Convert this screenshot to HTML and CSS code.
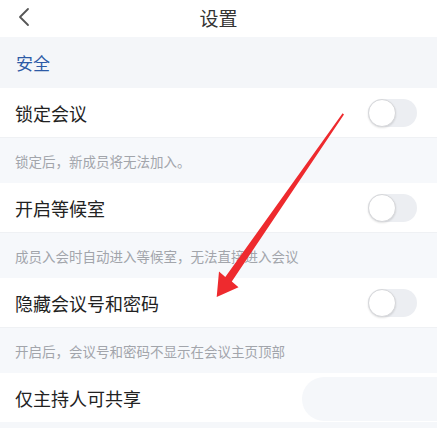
FILE: index.html
```html
<!DOCTYPE html>
<html lang="zh">
<head>
<meta charset="utf-8">
<link rel="stylesheet" href="styles.css">
</head>
<body>
<div class="page">
  <header class="topbar">
    <svg class="back" width="14" height="20" viewBox="0 0 14 20"><path d="M11 2 L3 10 L11 18" fill="none" stroke="#555" stroke-width="1.8" stroke-linecap="round" stroke-linejoin="round"/></svg>
    <div class="title">设置</div>
  </header>
  <div class="section">安全</div>
  <div class="row"><span class="label">锁定会议</span><span class="toggle"><span class="knob"></span></span></div>
  <div class="sub">锁定后，新成员将无法加入。</div>
  <div class="row"><span class="label">开启等候室</span><span class="toggle"><span class="knob"></span></span></div>
  <div class="sub">成员入会时自动进入等候室，无法直接进入会议</div>
  <div class="row"><span class="label">隐藏会议号和密码</span><span class="toggle"><span class="knob"></span></span></div>
  <div class="sub">开启后，会议号和密码不显示在会议主页顶部</div>
  <div class="row last"><span class="label">仅主持人可共享</span><span class="ghost"></span></div>
  <svg class="arrow" width="437" height="428" viewBox="0 0 437 428">
    <polygon points="216.7,297 219,271.5 225.3,277 342.6,113.2 344,114.4 231.8,281.6 238.5,287.2" fill="#ee2a2e"/>
  </svg>
</div>
</body>
</html>
```
FILE: styles.css
```css
html, body {
  margin: 0;
  padding: 0;
  background: #f5f7fa;
}
body {
  font-family: "Noto Sans CJK SC", "Noto Sans", sans-serif;
  width: 437px;
  height: 428px;
  overflow: hidden;
}
.page {
  position: relative;
  width: 437px;
  height: 428px;
  overflow: hidden;
}
.topbar {
  height: 37px;
  background: #ffffff;
  display: flex;
  align-items: center;
  justify-content: center;
  position: relative;
}
.back {
  position: absolute;
  left: 17px;
  top: 7px;
}
.title {
  font-size: 19px;
  color: #333;
  line-height: 1;
  margin-top: -3px;
}
.section {
  height: 51px;
  box-sizing: border-box;
  padding-left: 16px;
  display: flex;
  align-items: center;
  font-size: 17px;
  color: #2d5aa6;
  background: #f4f6f9;
}
.row {
  height: 49px;
  background: #fff;
  display: flex;
  align-items: center;
  justify-content: space-between;
  padding: 0 20px 0 15px;
  box-sizing: border-box;
  position: relative;
}
.label {
  font-size: 18px;
  color: #222;
}
.sub {
  height: 46px;
  background: #f6f8fb;
  border-top: 1px solid #eff1f4;
  box-sizing: border-box;
  display: flex;
  align-items: center;
  padding-left: 15px;
  font-size: 13.5px;
  color: #a2a5ab;
}
.toggle {
  width: 49px;
  height: 28px;
  border-radius: 14px;
  background: #eceef2;
  position: relative;
}
.knob {
  position: absolute;
  left: 0;
  top: 0;
  width: 28px;
  height: 28px;
  box-sizing: border-box;
  border-radius: 50%;
  background: #fff;
  border: 1.5px solid #d6d7da;
  box-shadow: 0 1px 2px rgba(0,0,0,0.12);
}
.ghost {
  position: absolute;
  left: 302px;
  top: 4px;
  width: 135px;
  height: 44px;
  border-radius: 22px 0 0 22px;
  background: #f5f7fa;
}
.arrow {
  position: absolute;
  left: 0;
  top: 0;
  pointer-events: none;
}
```
